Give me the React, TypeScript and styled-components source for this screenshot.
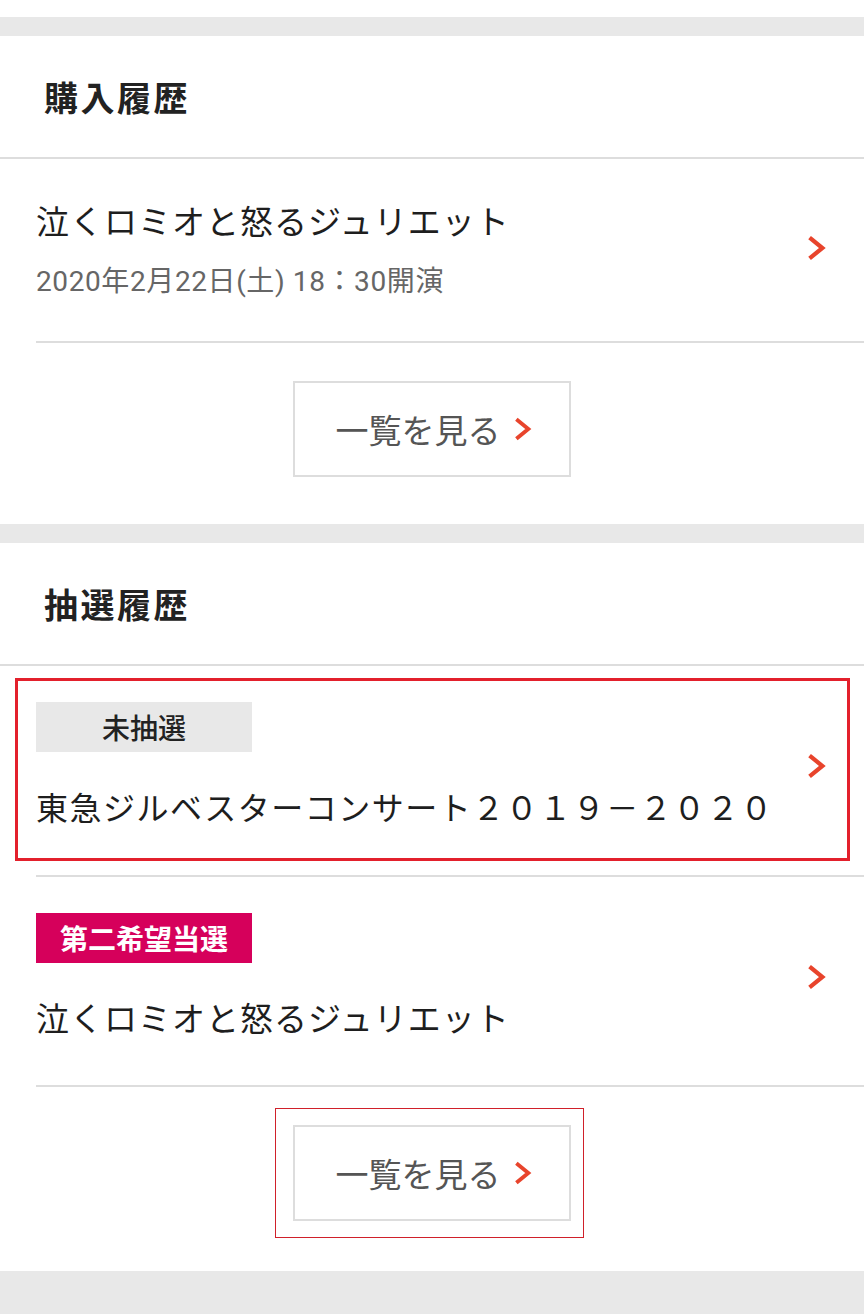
import styled, { createGlobalStyle } from "styled-components";

const GlobalStyle = createGlobalStyle`
  body {
    margin: 0;
    background: #ffffff;
    font-family: Roboto, "Noto Sans CJK JP", sans-serif;
    color: #222222;
  }
`;

const Chevron = ({ size = 28 }: { size?: number }) => (
  <svg width={size * 0.7} height={size} viewBox="0 0 14 20" fill="none">
    <polyline
      points="3,3.5 11,10 3,16.5"
      stroke="#e8442c"
      strokeWidth="3"
      strokeLinecap="square"
      strokeLinejoin="miter"
    />
  </svg>
);

interface BadgeProps {
  $tone: "gray" | "pink";
}

export default function App() {
  return (
    <Page>
      <GlobalStyle />
      <TopSpace />
      <Band />
      <Section>
        <SectionHeading>購入履歴</SectionHeading>
        <FullRule />
        <ItemRow $pt={37} $pb={41}>
          <ItemBody>
            <ItemTitle>泣くロミオと怒るジュリエット</ItemTitle>
            <ItemDate>2020年2月22日(土) 18：30開演</ItemDate>
          </ItemBody>
          <Chevron />
        </ItemRow>
        <InsetRule />
        <MoreArea $pt={38} $pb={47}>
          <MoreButton>
            一覧を見る
            <Chevron size={26} />
          </MoreButton>
        </MoreArea>
      </Section>
      <Band />
      <Section>
        <SectionHeading>抽選履歴</SectionHeading>
        <FullRule />
        <Focused>
          <ItemRow $pt={21} $pb={28} $pl={18}>
            <ItemBody>
              <Badge $tone="gray">未抽選</Badge>
              <LotteryTitle>東急ジルベスターコンサート２０１９－２０２０</LotteryTitle>
            </ItemBody>
            <Chevron />
          </ItemRow>
        </Focused>
        <InsetRule />
        <ItemRow $pt={36} $pb={44}>
          <ItemBody>
            <Badge $tone="pink">第二希望当選</Badge>
            <LotteryTitle $plain>泣くロミオと怒るジュリエット</LotteryTitle>
          </ItemBody>
          <Chevron />
        </ItemRow>
        <InsetRule />
        <MoreArea $pt={21} $pb={33}>
          <FocusRing>
            <MoreButton>
              一覧を見る
              <Chevron size={26} />
            </MoreButton>
          </FocusRing>
        </MoreArea>
      </Section>
      <BottomBand />
    </Page>
  );
}

const Page = styled.div`
  width: 864px;
  min-height: 1314px;
  display: flex;
  flex-direction: column;
  background: #ffffff;
`;

const TopSpace = styled.div`
  height: 17px;
`;

const Band = styled.div`
  height: 19px;
  background: #e8e8e8;
`;

const BottomBand = styled.div`
  flex: 1;
  background: #e8e8e8;
`;

const Section = styled.section`
  display: flex;
  flex-direction: column;
`;

const SectionHeading = styled.h2`
  margin: 0;
  height: 121px;
  padding-left: 44px;
  display: flex;
  align-items: center;
  font-family: "Noto Sans CJK JP", sans-serif;
  font-size: 34px;
  font-weight: 700;
  letter-spacing: 2.5px;
  color: #222222;
`;

const FullRule = styled.hr`
  margin: 0;
  border: none;
  height: 2px;
  background: #dddddd;
`;

const InsetRule = styled.hr`
  margin: 0 0 0 36px;
  border: none;
  height: 2px;
  background: #dddddd;
`;

const ItemRow = styled.div<{ $pt: number; $pb: number; $pl?: number }>`
  display: flex;
  align-items: center;
  justify-content: space-between;
  padding: ${(p) => p.$pt}px 37px ${(p) => p.$pb}px ${(p) => p.$pl ?? 36}px;
`;

const Focused = styled.div`
  margin: 12px 14px 14px 15px;
  border: 3px solid #e3202c;
  & > ${ItemRow} {
    padding-right: 20px;
  }
`;

const ItemBody = styled.div`
  display: flex;
  flex-direction: column;
  align-items: flex-start;
`;

const ItemTitle = styled.div`
  font-family: "Noto Sans CJK JP", sans-serif;
  font-size: 33px;
  line-height: 48px;
  letter-spacing: 1px;
  color: #1e1e1e;
`;

const ItemDate = styled.div`
  margin-top: 20px;
  font-family: Roboto, "Noto Sans CJK JP", sans-serif;
  font-size: 28px;
  line-height: 36px;
  color: #666666;
  letter-spacing: 0.6px;
`;

const Badge = styled.span<BadgeProps>`
  width: 216px;
  height: 50px;
  display: flex;
  align-items: center;
  justify-content: center;
  font-family: "Noto Sans CJK JP", sans-serif;
  font-size: 28px;
  font-weight: ${(p) => (p.$tone === "pink" ? 700 : 500)};
  background: ${(p) => (p.$tone === "pink" ? "#d6005b" : "#e8e8e8")};
  color: ${(p) => (p.$tone === "pink" ? "#ffffff" : "#222222")};
`;

const LotteryTitle = styled(ItemTitle)<{ $plain?: boolean }>`
  margin-top: 30px;
  font-size: ${(p) => (p.$plain ? "33px" : "32px")};
  letter-spacing: ${(p) => (p.$plain ? "1px" : "1.5px")};
`;

const MoreArea = styled.div<{ $pt: number; $pb: number }>`
  display: flex;
  justify-content: center;
  padding: ${(p) => p.$pt}px 0 ${(p) => p.$pb}px;
`;

const FocusRing = styled.div`
  padding: 16px 12px 16px 17px;
  margin-left: -5px;
  border: 1px solid #d0202a;
`;

const MoreButton = styled.button`
  width: 278px;
  height: 96px;
  display: flex;
  align-items: center;
  justify-content: center;
  gap: 14px;
  padding: 0 0 0 4px;
  background: #ffffff;
  border: 2px solid #dddddd;
  font-family: "Noto Sans CJK JP", sans-serif;
  font-size: 33px;
  color: #555555;
  cursor: pointer;
`;
